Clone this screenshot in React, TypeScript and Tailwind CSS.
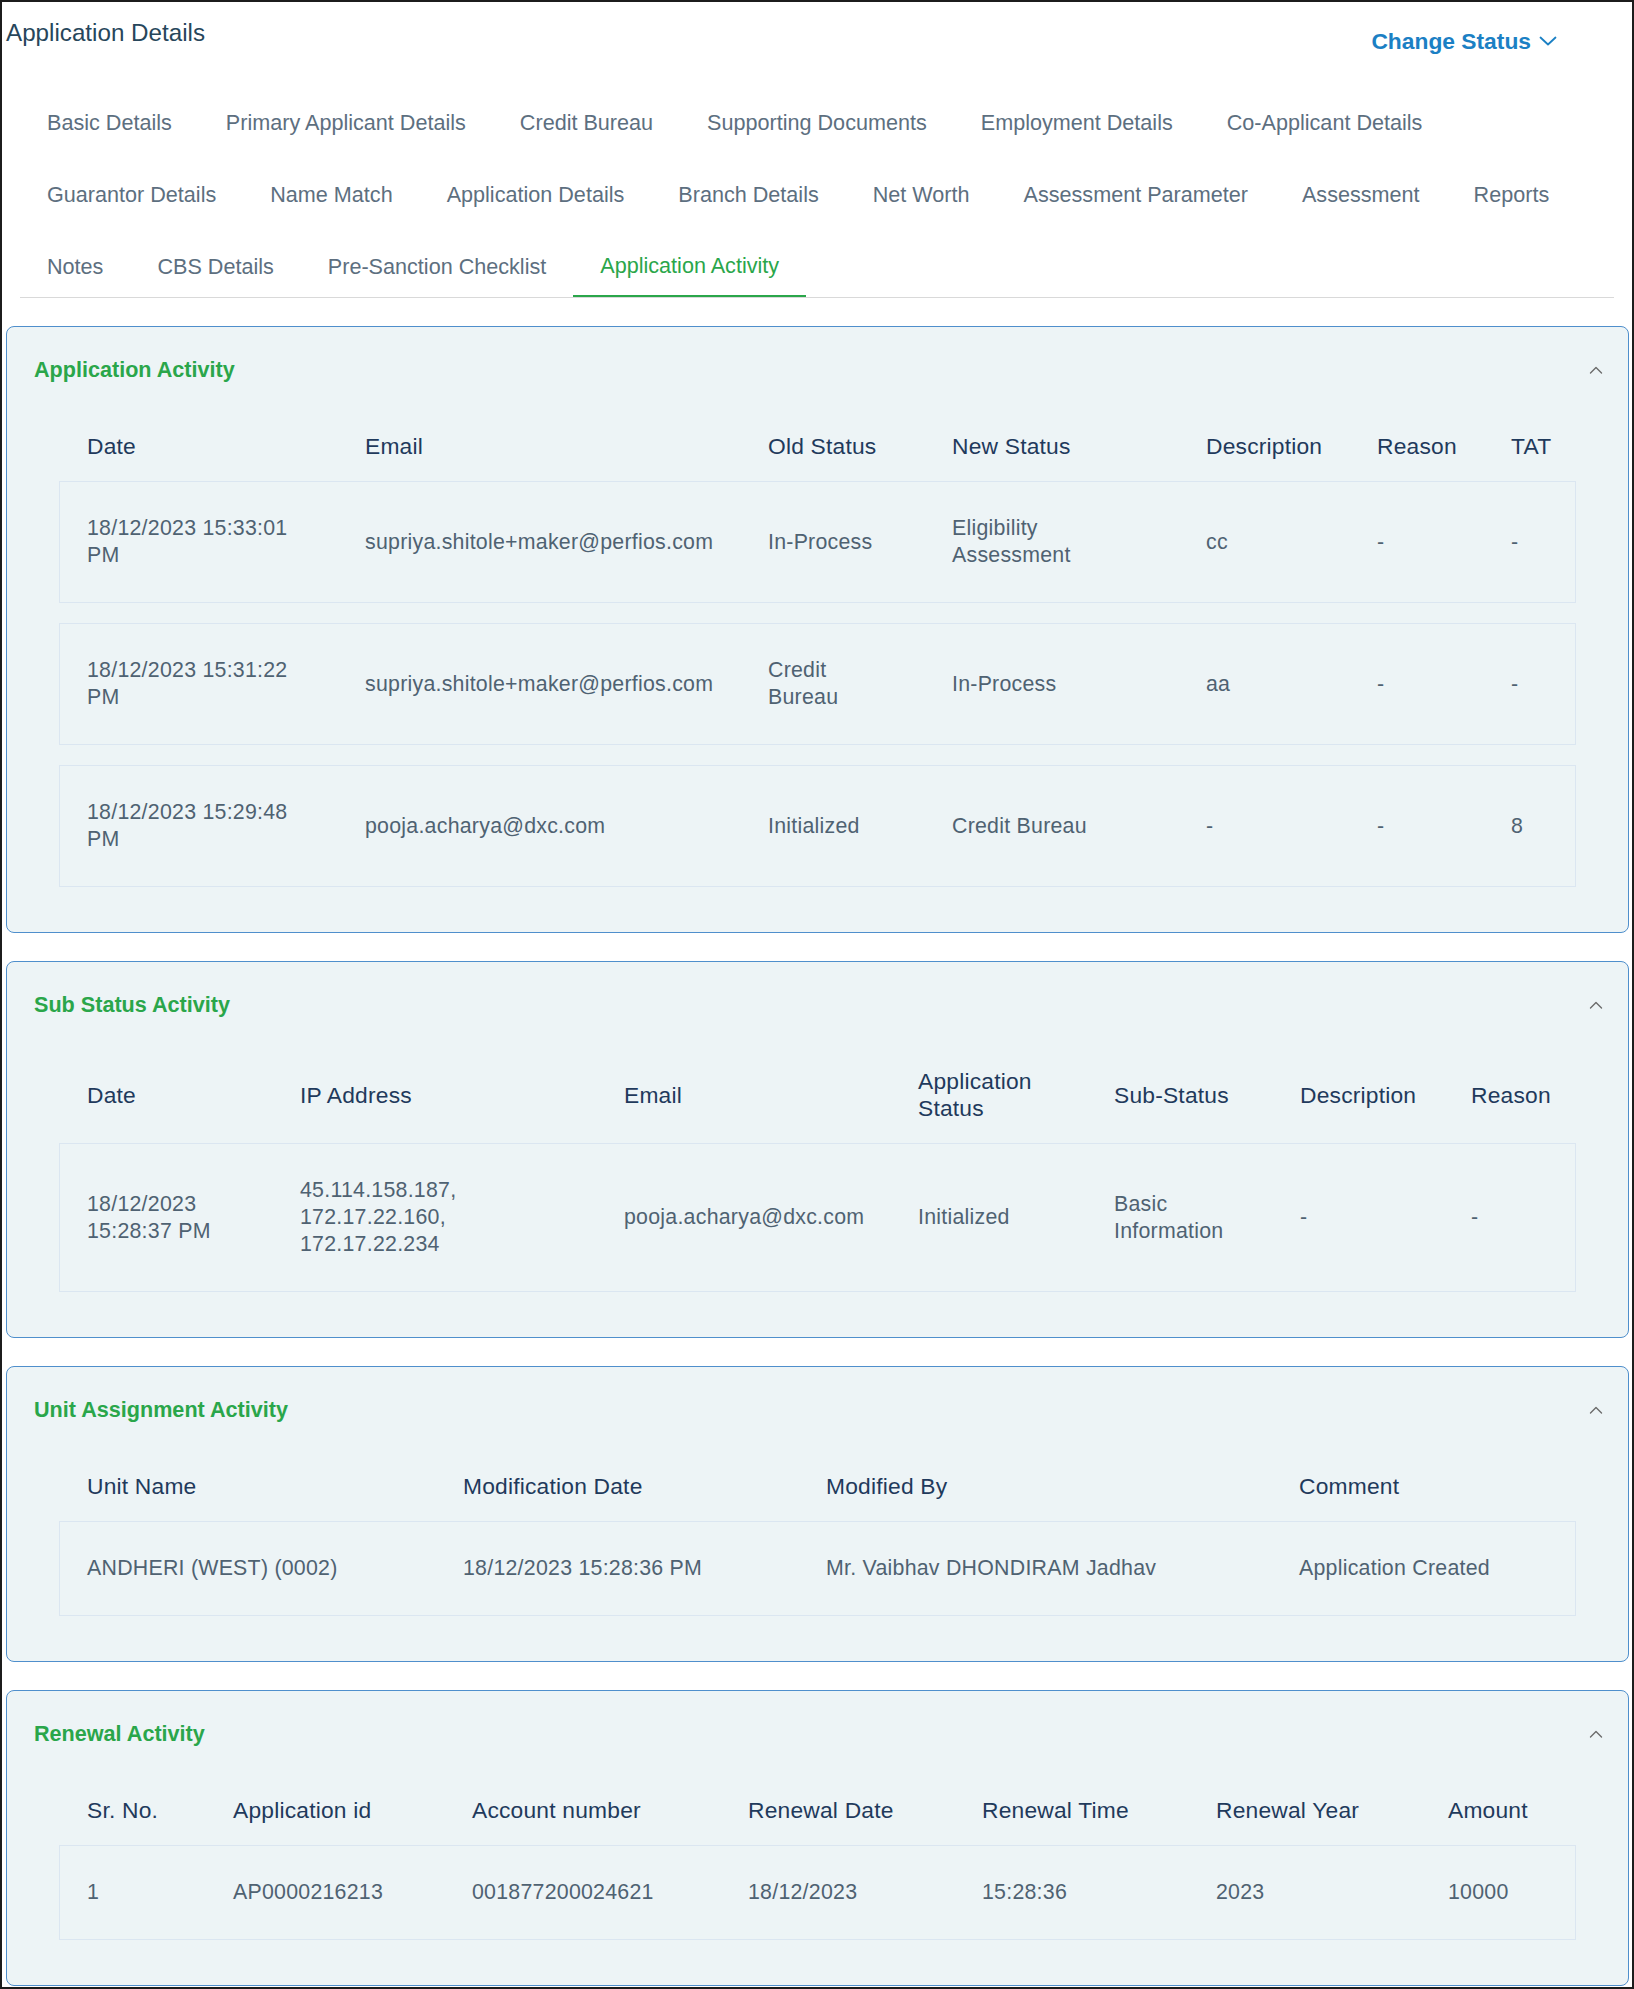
import React from 'react';

type Section = {
  title: string;
  cols: number[];
  headers: string[];
  rows: string[][];
};

const TAB_ROWS: string[][] = [
  ['Basic Details', 'Primary Applicant Details', 'Credit Bureau', 'Supporting Documents', 'Employment Details', 'Co-Applicant Details'],
  ['Guarantor Details', 'Name Match', 'Application Details', 'Branch Details', 'Net Worth', 'Assessment Parameter', 'Assessment', 'Reports'],
  ['Notes', 'CBS Details', 'Pre-Sanction Checklist', 'Application Activity'],
];

const ACTIVE_TAB = 'Application Activity';

const SECTIONS: Section[] = [
  {
    title: 'Application Activity',
    cols: [278, 403, 184, 254, 171, 134, 92],
    headers: ['Date', 'Email', 'Old Status', 'New Status', 'Description', 'Reason', 'TAT'],
    rows: [
      ['18/12/2023 15:33:01\nPM', 'supriya.shitole+maker@perfios.com', 'In-Process', 'Eligibility\nAssessment', 'cc', '-', '-'],
      ['18/12/2023 15:31:22\nPM', 'supriya.shitole+maker@perfios.com', 'Credit\nBureau', 'In-Process', 'aa', '-', '-'],
      ['18/12/2023 15:29:48\nPM', 'pooja.acharya@dxc.com', 'Initialized', 'Credit Bureau', '-', '-', '8'],
    ],
  },
  {
    title: 'Sub Status Activity',
    cols: [213, 324, 294, 196, 186, 171, 132],
    headers: ['Date', 'IP Address', 'Email', 'Application\nStatus', 'Sub-Status', 'Description', 'Reason'],
    rows: [
      ['18/12/2023\n15:28:37 PM', '45.114.158.187,\n172.17.22.160,\n172.17.22.234', 'pooja.acharya@dxc.com', 'Initialized', 'Basic\nInformation', '-', '-'],
    ],
  },
  {
    title: 'Unit Assignment Activity',
    cols: [376, 363, 473, 304],
    headers: ['Unit Name', 'Modification Date', 'Modified By', 'Comment'],
    rows: [['ANDHERI (WEST) (0002)', '18/12/2023 15:28:36 PM', 'Mr. Vaibhav DHONDIRAM Jadhav', 'Application Created']],
  },
  {
    title: 'Renewal Activity',
    cols: [146, 239, 276, 234, 234, 232, 155],
    headers: ['Sr. No.', 'Application id', 'Account number', 'Renewal Date', 'Renewal Time', 'Renewal Year', 'Amount'],
    rows: [['1', 'AP0000216213', '001877200024621', '18/12/2023', '15:28:36', '2023', '10000']],
  },
];

function ChevronUp() {
  return (
    <svg width="14" height="8" viewBox="0 0 14 8" fill="none" className="block">
      <polyline points="1.5,7 7,1.5 12.5,7" stroke="#6b6b6b" strokeWidth="1.4" strokeLinecap="round" strokeLinejoin="round" />
    </svg>
  );
}

function ActivityCard({ section }: { section: Section }) {
  const template = section.cols.map((c) => `${c}px`).join(' ');
  return (
    <div className="rounded-[8px] border border-[#4f8fcc] bg-[#edf4f6] pb-[45px]">
      <div className="flex items-center justify-between pl-[27px] pr-[25px] pt-[29px]">
        <h3 className="text-[21.6px] font-bold leading-[27px] text-[#2aa64a]">{section.title}</h3>
        <ChevronUp />
      </div>
      <div className="mt-[28px] px-[52px]">
        {/* header row */}
        <div className="grid border border-transparent pb-[20px] pt-[21px]" style={{ gridTemplateColumns: template }}>
          {section.headers.map((h) => (
            <div key={h} className="flex items-center whitespace-pre-line pl-[27px] text-[22.8px] leading-[27px] tracking-[0.2px] text-[#1f3a5c]">
              {h}
            </div>
          ))}
        </div>
        <div className="flex flex-col gap-[20px]">
          {section.rows.map((row, i) => (
            <div
              key={i}
              className="grid border border-[#dbe6f1] py-[33px]"
              style={{ gridTemplateColumns: template }}
            >
              {row.map((cell, j) => (
                <div key={j} className="flex items-center whitespace-pre-line pl-[27px] text-[21.33px] leading-[27px] tracking-[0.25px] text-[#4f6272]">
                  {cell}
                </div>
              ))}
            </div>
          ))}
        </div>
      </div>
    </div>
  );
}

export default function App() {
  const last = TAB_ROWS.length - 1;
  return (
    <div className="h-[1989px] w-[1634px] overflow-hidden border-2 border-[#1c1c1c] bg-white font-['Liberation_Sans',Arial,sans-serif]">
      {/* top bar */}
      <div className="flex h-[85px] items-start justify-between">
        <h1 className="pl-[4px] pt-[15px] text-[24.2px] leading-[32px] text-[#27465b]">Application Details</h1>
        <button type="button" className="mr-[75px] mt-[25px] flex items-center gap-[8px] text-[22.8px] font-bold leading-[28px] text-[#1b80c4]">
          Change Status
          <svg width="18" height="10" viewBox="0 0 18 10" fill="none">
            <polyline points="1.5,1.5 9,8.5 16.5,1.5" stroke="#1b80c4" strokeWidth="1.8" strokeLinecap="round" strokeLinejoin="round" />
          </svg>
        </button>
      </div>

      {/* tabs */}
      <div className="mx-[18px] border-b border-[#d9d9d9]">
        {TAB_ROWS.map((row, i) => (
          <div key={i} className={`flex ${i === last ? 'h-[66px]' : 'h-[72px]'}`}>
            {row.map((t) => (
              <div
                key={t}
                className={`flex items-center px-[27px] text-[21.6px] ${i === last ? 'pt-[6px]' : ''} ${
                  t === ACTIVE_TAB ? 'border-b-2 border-[#2aa64a] text-[#2aa64a]' : 'text-[#5d6f7f]'
                }`}
              >
                {t}
              </div>
            ))}
          </div>
        ))}
      </div>

      {/* sections */}
      <div className="ml-[4px] mr-[3px] mt-[28px] flex flex-col gap-[28px]">
        {SECTIONS.map((s) => (
          <ActivityCard key={s.title} section={s} />
        ))}
      </div>
    </div>
  );
}
